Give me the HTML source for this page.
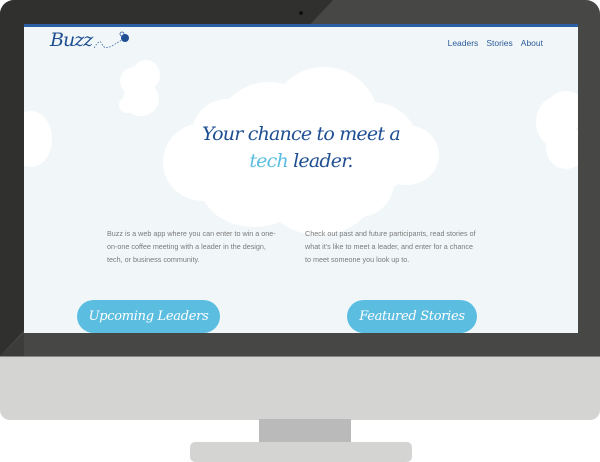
<!DOCTYPE html>
<html><head><meta charset="utf-8"><style>
*{margin:0;padding:0}
body{width:600px;height:458px;background:#fff;position:relative;overflow:hidden;font-family:"Liberation Sans",sans-serif}
.bez{position:absolute;left:0;top:0;width:600px;height:356px;border-radius:14px 14px 0 0;background:#474746;overflow:hidden}
.dark{position:absolute;left:0;top:0;width:600px;height:356px;background:#30302f;clip-path:polygon(0 0,333px 0,0 356px)}
.light{position:absolute;left:0;top:333px;width:24px;height:23px;background:#3c3c3b;clip-path:polygon(24px 0,24px 23px,0 23px)}
.chin{position:absolute;left:0;top:356px;width:600px;height:63px;background:#d4d4d3;border-radius:0 0 10px 10px;border-top:1px solid #888}
.neck{position:absolute;left:259px;top:419px;width:92px;height:24px;background:#bababa}
.base{position:absolute;left:190px;top:442px;width:222px;height:20px;background:#d4d4d3;border-radius:5px}
.cam{position:absolute;left:299px;top:11px;width:4px;height:4px;border-radius:50%;background:#111}
.scr{position:absolute;left:24px;top:24px;width:554px;height:309px;background:#f1f7f8;overflow:hidden;border-top:3px solid #2c5ea3;box-sizing:border-box}
.c{position:absolute;background:#fff;border-radius:50%}
.nav{position:absolute;top:11px;right:35px;font-size:8.5px;color:#2d5b9a}
.nav span{margin-left:8px}
h1{position:absolute;left:0;width:554px;text-align:center;top:94px;font:italic 19px/27px 'DejaVu Serif',serif;color:#1f4f93;letter-spacing:-0.8px}
.p{position:absolute;top:200px;width:172px;font-size:7.2px;line-height:13px;color:#7a7a7a}
.btn{position:absolute;top:273px;height:33px;border-radius:17px;background:#5bbde0;color:#fff;font:italic 13px/33px 'DejaVu Serif',serif;text-align:center;letter-spacing:-0.3px}
</style></head><body>
<div class="bez"><div class="dark"></div><div class="light"></div><div class="cam"></div>
<div class="scr">
 <div class="c" style="left:96px;top:40px;width:28px;height:28px"></div>
 <div class="c" style="left:108px;top:33px;width:28px;height:30px"></div>
 <div class="c" style="left:99px;top:55px;width:36px;height:34px"></div>
 <div class="c" style="left:95px;top:70px;width:16px;height:16px"></div>
 <div class="c" style="left:-14px;top:84px;width:42px;height:56px"></div>
 <div class="c" style="left:512px;top:70px;width:40px;height:50px"></div>
 <div class="c" style="left:522px;top:64px;width:40px;height:40px"></div>
 <div class="c" style="left:522px;top:100px;width:40px;height:42px"></div>
 <div class="c" style="left:139px;top:96px;width:80px;height:78px"></div>
 <div class="c" style="left:168px;top:72px;width:70px;height:70px"></div>
 <div class="c" style="left:190px;top:55px;width:110px;height:110px"></div>
 <div class="c" style="left:245px;top:40px;width:110px;height:110px"></div>
 <div class="c" style="left:300px;top:75px;width:95px;height:90px"></div>
 <div class="c" style="left:350px;top:98px;width:65px;height:60px"></div>
 <div class="c" style="left:175px;top:110px;width:110px;height:90px"></div>
 <div class="c" style="left:240px;top:120px;width:110px;height:88px"></div>
 <div class="c" style="left:300px;top:120px;width:70px;height:70px"></div>
 <div style="position:absolute;left:26px;top:2px;font:italic 19px 'DejaVu Serif',serif;color:#1f4f93;letter-spacing:-1px">Buzz</div>
 <svg style="position:absolute;left:70px;top:3px" width="40" height="22"><path d="M0 18 Q6 8 8 14 Q10 20 18 16 Q24 12 28 10" fill="none" stroke="#2c5ea3" stroke-dasharray="1.5 1.5" stroke-width="0.8"/><circle cx="31" cy="8" r="4" fill="#1f4f93"/><circle cx="28" cy="4" r="2" fill="none" stroke="#2c5ea3" stroke-width="0.8"/></svg>
 <div class="nav"><span>Leaders</span><span>Stories</span><span>About</span></div>
 <h1>Your chance to meet a<br><span style="color:#5bbde0">tech</span> leader.</h1>
 <div class="p" style="left:83px">Buzz is a web app where you can enter to win a one-on-one coffee meeting with a leader in the design, tech, or business community.</div>
 <div class="p" style="left:281px">Check out past and future participants, read stories of what it's like to meet a leader, and enter for a chance to meet someone you look up to.</div>
 <div class="btn" style="left:53px;width:143px">Upcoming Leaders</div>
 <div class="btn" style="left:323px;width:130px">Featured Stories</div>
</div>
</div>
<div class="chin"></div>
<div class="neck"></div>
<div class="base"></div>
</body></html>
